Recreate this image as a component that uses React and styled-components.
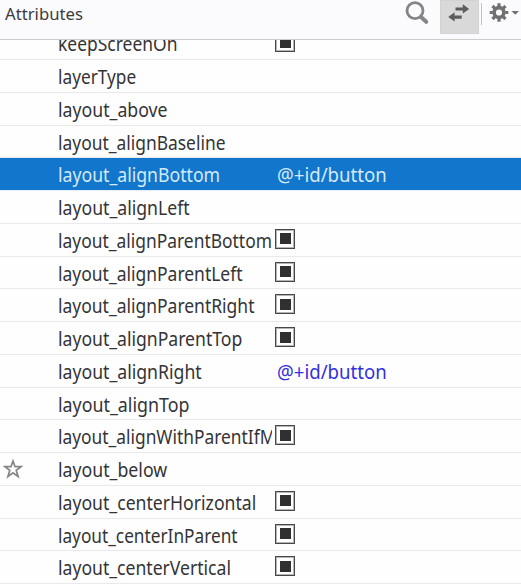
import React from "react";
import styled, { createGlobalStyle } from "styled-components";

const GlobalStyle = createGlobalStyle`
  * { box-sizing: border-box; }
  body { margin: 0; background: #fefefe; overflow: hidden; font-family: "Noto Sans", "Open Sans", sans-serif; }
`;

const Panel = styled.div`
  display: flex;
  flex-direction: column;
  width: 521px;
  height: 584px;
  overflow: hidden;
`;

const Header = styled.header`
  display: flex;
  flex: none;
  height: 40px;
  background: #fbfafc;
  border-bottom: 1px solid #cdcdcd;
`;

const Title = styled.h1`
  flex: 1;
  margin: 0;
  padding-left: 5px;
  font-size: 16.7px;
  font-weight: 400;
  line-height: 28px;
  color: #3c3c3e;
`;

const Tools = styled.div`
  display: flex;
  align-items: flex-start;
`;

const ToolButton = styled.button`
  display: block;
  width: ${(p) => p.$width}px;
  height: 34px;
  padding: 0;
  border: 0;
  background: ${(p) => (p.$active ? "#d9d9d9" : "transparent")};
  box-shadow: ${(p) => (p.$active ? "inset 0 0 0 1px #d2d2d2" : "none")};

  svg { display: block; }
`;

const Divider = styled.span`
  width: 1px;
  height: 22px;
  margin: 3px 1px 0 2px;
  background: #c4c4c4;
`;

const List = styled.div`
  flex: 1;
  min-height: 0;
  overflow: hidden;
`;

const Rows = styled.div`
  margin-top: -12.75px;
`;

const Row = styled.div`
  display: grid;
  grid-template-columns: 58px 214px 1fr;
  height: 32.75px;
  border-bottom: 1px solid ${(p) => (p.$selected ? "#e6eef5" : "#e9e9eb")};
  background: ${(p) => (p.$selected ? "#1176cc" : "#fefefe")};
  color: ${(p) => (p.$selected ? "#d5e9f8" : "#343436")};
`;

const Mark = styled.div`
  padding: 6px 0 0 3px;
  svg { display: block; }
`;

const NameCell = styled.div`
  overflow: hidden;
  white-space: nowrap;
`;

const Text = styled.span`
  display: inline-block;
  font-size: 19.5px;
  line-height: 33px;
  transform: scaleX(${(p) => p.$stretch});
  transform-origin: 0 50%;
`;

const ValueCell = styled.div`
  padding-left: ${(p) => (p.$check ? 3 : 5)}px;
  color: ${(p) => (p.$selected ? "#d5e9f8" : "#3330dc")};
`;

const CheckBox = styled.div`
  display: flex;
  align-items: center;
  justify-content: center;
  width: 20px;
  height: 20px;
  margin-top: 5px;
  border: 1px solid #48484a;
  background: #fff;
  box-shadow: inset 0 0 0 1px #b4b4b6;

  &::before {
    content: "";
    width: 11px;
    height: 11px;
    background: #303032;
  }
`;

const rows = [
  { name: "keepScreenOn", stretch: 0.895, check: true },
  { name: "layerType", stretch: 0.885 },
  { name: "layout_above", stretch: 0.908 },
  { name: "layout_alignBaseline", stretch: 0.893 },
  { name: "layout_alignBottom", stretch: 0.905, value: "@+id/button", selected: true },
  { name: "layout_alignLeft", stretch: 0.905 },
  { name: "layout_alignParentBottom", stretch: 0.893, check: true },
  { name: "layout_alignParentLeft", stretch: 0.896, check: true },
  { name: "layout_alignParentRight", stretch: 0.896, check: true },
  { name: "layout_alignParentTop", stretch: 0.902, check: true },
  { name: "layout_alignRight", stretch: 0.905, value: "@+id/button" },
  { name: "layout_alignTop", stretch: 0.914 },
  { name: "layout_alignWithParentIfMissing", stretch: 0.89, check: true },
  { name: "layout_below", stretch: 0.908, star: true },
  { name: "layout_centerHorizontal", stretch: 0.904, check: true },
  { name: "layout_centerInParent", stretch: 0.884, check: true },
  { name: "layout_centerVertical", stretch: 0.902, check: true },
];

const SearchIcon = () => (
  <svg width="36" height="34" viewBox="0 0 36 34" fill="none" stroke="#858585">
    <circle cx="11" cy="10.700" r="8" strokeWidth="2.800" />
    <path d="M17 17l5.200 4.800" strokeWidth="4" strokeLinecap="round" />
  </svg>
);

const SwapIcon = () => (
  <svg width="39" height="34" viewBox="0 0 39 34" fill="#5c5c5c">
    <path d="M15.500 7.400h7.300V4.200L29.200 9l-6.400 4.600v-3H15.500z" />
    <path d="M21.700 15.500h-7.100v-3.300L8.200 17l6.400 4.600v-2.900h7.100z" />
  </svg>
);

const GearIcon = () => (
  <svg width="38" height="34" viewBox="0 0 38 34" fill="none" stroke="#707070">
    <circle cx="16" cy="12.500" r="4.900" strokeWidth="3.600" />
    <g strokeWidth="3.200">
      <path d="M16 3.200v3M16 18.800v3M6.700 12.500h3M22.300 12.500h3" />
      <path d="M9.500 6l2.100 2.100M20.400 16.900l2.100 2.100M22.500 6l-2.100 2.100M11.600 16.900L9.500 19" />
    </g>
    <path d="M28.500 11h7.500l-3.750 3.700z" fill="#707070" stroke="none" />
  </svg>
);

const StarIcon = () => (
  <svg width="20" height="20" viewBox="0 0 20 20" fill="none" stroke="#858585" strokeWidth="1.700">
    <path d="M10 2l2 5.700h6l-4.800 3.600 1.900 6.200L10 13.800l-5.100 3.700 1.900-6.200L2 7.700h6z" />
  </svg>
);

export default function App() {
  return (
    <Panel>
      <GlobalStyle />
      <Header>
        <Title>Attributes</Title>
        <Tools>
          <ToolButton $width={36} aria-label="Search"><SearchIcon /></ToolButton>
          <ToolButton $width={39} $active aria-label="Toggle view"><SwapIcon /></ToolButton>
          <Divider />
          <ToolButton $width={38} aria-label="Settings"><GearIcon /></ToolButton>
        </Tools>
      </Header>
      <List>
        <Rows>
          {rows.map((r) => (
            <Row key={r.name} $selected={r.selected}>
              <Mark>{r.star && <StarIcon />}</Mark>
              <NameCell><Text $stretch={r.stretch}>{r.name}</Text></NameCell>
              <ValueCell $check={r.check} $selected={r.selected}>
                {r.check && <CheckBox />}
                {r.value && <Text $stretch={0.955}>{r.value}</Text>}
              </ValueCell>
            </Row>
          ))}
        </Rows>
      </List>
    </Panel>
  );
}
